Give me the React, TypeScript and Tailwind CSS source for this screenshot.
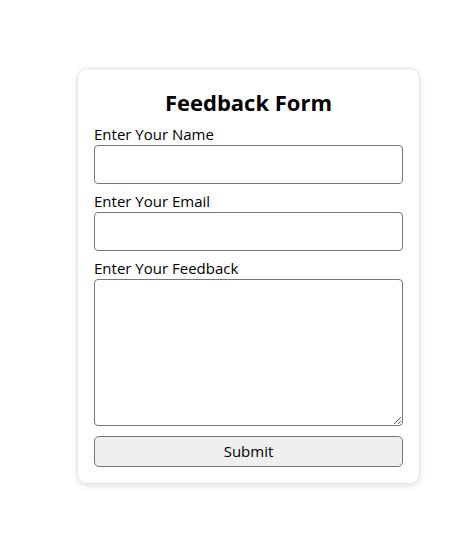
import React from 'react';

const fields = [
  { label: 'Enter Your Name', type: 'text' },
  { label: 'Enter Your Email', type: 'email' },
];

const App: React.FC = () => {
  return (
    <div className="min-h-[553px] bg-white pt-[68px] font-['Open_Sans','Noto_Sans',sans-serif] text-black">
      <form
        onSubmit={(e) => e.preventDefault()}
        className="ml-[77px] w-[343px] rounded-[10px] border border-[#e4e4e4] bg-white px-4 pt-[18px] pb-4 shadow-[0_2px_6px_rgba(0,0,0,0.12)] flex flex-col"
      >
        <h2 className="text-center text-[22px] font-bold leading-[30px] mb-[7px]">Feedback Form</h2>
        {fields.map((f) => (
          <div key={f.label} className="flex flex-col mb-[7px]">
            <label className="text-[15px] leading-[20px] mb-[1px]">{f.label}</label>
            <input
              type={f.type}
              className="h-[39px] w-full rounded-[4px] border border-[#767676] px-2 outline-none"
            />
          </div>
        ))}
        <div className="flex flex-col mb-[10px]">
          <label className="text-[15px] leading-[20px] mb-[1px]">Enter Your Feedback</label>
          <textarea className="h-[147px] w-full rounded-[4px] border border-[#767676] px-2 outline-none resize-y" />
        </div>
        <button
          type="submit"
          className="h-[31px] w-full rounded-[5px] border border-[#767676] bg-[#efefef] text-[15px]"
        >
          Submit
        </button>
      </form>
    </div>
  );
};

export default App;
